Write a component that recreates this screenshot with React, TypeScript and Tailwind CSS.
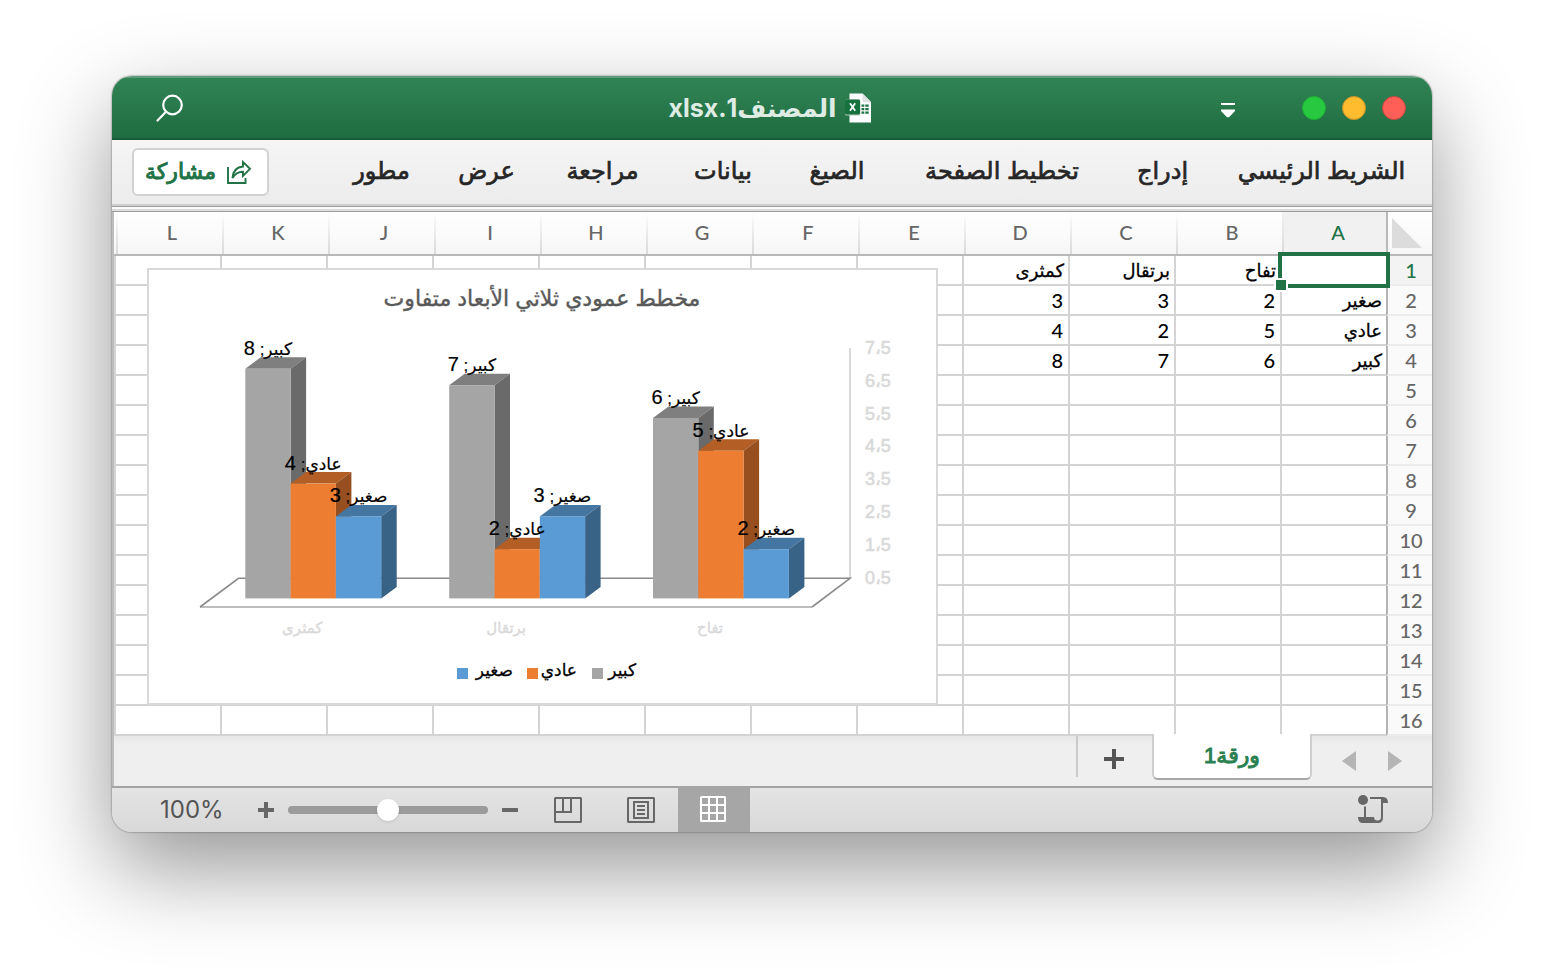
import React from 'react';

const TABS = [
  { label: 'الشريط الرئيسي', width: 'w-[163px]' },
  { label: 'إدراج', width: 'w-[55px]' },
  { label: 'تخطيط الصفحة', width: 'w-[166px]' },
  { label: 'الصيغ', width: 'w-16' },
  { label: 'بيانات', width: 'w-16' },
  { label: 'مراجعة', width: 'w-[77px]' },
  { label: 'عرض', width: 'w-[55px]' },
  { label: 'مطور', width: 'w-[55px]' },
];
const COLUMNS = ['A', 'B', 'C', 'D', 'E', 'F', 'G', 'H', 'I', 'J', 'K', 'L'];
const ROWS = Array.from({ length: 16 }, (_, i) => i + 1);
const CELLS: Record<string, string | number> = {
  B1: 'تفاح', C1: 'برتقال', D1: 'كمثرى',
  A2: 'صغير', B2: 2, C2: 3, D2: 3,
  A3: 'عادي', B3: 5, C3: 2, D3: 4,
  A4: 'كبير', B4: 6, C4: 7, D4: 8,
};

const SERIES = [
  { name: 'كبير', front: '#a5a5a5', top: '#7f7f7f', side: '#6a6a6a' },
  { name: 'عادي', front: '#ed7d31', top: '#b35e25', side: '#974f1f' },
  { name: 'صغير', front: '#5b9bd5', top: '#4575a1', side: '#396287' },
];
const GROUPS = [
  { name: 'كمثرى', x: 245.3, values: [8, 4, 3] },
  { name: 'برتقال', x: 449.2, values: [7, 2, 3] },
  { name: 'تفاح', x: 653, values: [6, 5, 2] },
];
const BASE = 598.4;
const UNIT = 32.8;
const BAR = 45.3;
const barTop = (v: number) => BASE - (Math.min(v, 7.5) - 0.5) * UNIT;

function Chart() {
  return (
    <svg viewBox="149 270 787 433" className="block w-full font-['Liberation_Sans','DejaVu_Sans',sans-serif]" role="img" aria-label="مخطط عمودي ثلاثي الأبعاد متفاوت">
      <text x="542" y="306" textAnchor="middle" direction="rtl" fontSize="22" fill="#595959" stroke="#595959" strokeWidth="0.4">مخطط عمودي ثلاثي الأبعاد متفاوت</text>
      <path d="M850 348V578" stroke="#d9d9d9" strokeWidth="2" />
      <path d="M812 607H200" stroke="#bdbdbd" strokeWidth="2" fill="none" />
      <path d="M200 607L238.5 578.3H850L812 607" stroke="#8a8a8a" strokeWidth="1.6" fill="none" />
      {[7, 6, 5, 4, 3, 2, 1, 0].map((n, i) => (
        <text key={n} x="865" y={354 + i * UNIT} direction="ltr" fontSize="18" fill="#d9d9d9" stroke="#d9d9d9" strokeWidth="0.6">{`${n}،5`}</text>
      ))}
      {GROUPS.map((g) => (
        <g key={g.name}>
          {g.values.map((v, i) => {
            const x = g.x + i * BAR;
            const r = x + BAR;
            const t = barTop(v);
            const s = SERIES[i];
            return (
              <g key={s.name}>
                <path d={`M${x} ${t}L${x + 15.5} ${t - 11.5}H${r + 15.5}L${r} ${t}Z`} fill={s.top} />
                <path d={`M${r} ${t}L${r + 15.5} ${t - 11.5}V${BASE - 11.5}L${r} ${BASE}Z`} fill={s.side} />
                <rect x={x} y={t} width={BAR} height={BASE - t} fill={s.front} />
              </g>
            );
          })}
          <text x={g.x + 57} y="633" textAnchor="middle" direction="rtl" fontSize="15" fill="#d9d9d9" stroke="#d9d9d9" strokeWidth="0.4">{g.name}</text>
        </g>
      ))}
      {GROUPS.map((g) =>
        g.values.map((v, i) => (
          <text key={g.name + i} x={g.x + (i + 0.5) * BAR} y={barTop(v) - 14} textAnchor="middle" direction="rtl" fontSize="17" fill="#000" stroke="#000" strokeWidth="0.2">
            {`${SERIES[i].name}; `}<tspan fontSize="20">{v}</tspan>
          </text>
        )),
      )}
      {[{ s: 2, x: 457, t: 513 }, { s: 1, x: 527, t: 577 }, { s: 0, x: 592, t: 636 }].map((l) => (
        <g key={l.s}>
          <rect x={l.x} y="668" width="11" height="11" fill={SERIES[l.s].front} />
          <text x={l.t} y="676" direction="rtl" fontSize="17" fill="#000" stroke="#000" strokeWidth="0.3">{SERIES[l.s].name}</text>
        </g>
      ))}
    </svg>
  );
}

function TitleBar() {
  return (
    <header className="grid h-16 grid-cols-[1fr_auto_1fr] items-center border-t-2 border-b-2 border-t-[#5f9c7b] border-b-[#185c37] bg-linear-to-b from-[#318455] to-[#1e6c41] pr-[26px] pl-[22px]">
      <div className="flex items-center gap-4">
        <button aria-label="إغلاق" className="size-6 rounded-full border border-[#c9473f] bg-[#ff5f57]" />
        <button aria-label="تصغير" className="size-6 rounded-full border border-[#c8932a] bg-[#febc2e]" />
        <button aria-label="تكبير" className="size-6 rounded-full border border-[#1fae36] bg-[#28c840]" />
        <button aria-label="تخصيص شريط الأدوات" className="mr-[51px]">
          <svg viewBox="0 0 14 15" className="mt-1 block h-[15px] w-3.5" fill="#fff"><path d="M0 0h14v2H0zM0 6.5h14v1.5L8 14.3H6L0 8z" /></svg>
        </button>
      </div>
      <div className="flex items-center gap-2">
        <svg viewBox="0 0 27 30" className="h-[30px] w-[27px]" aria-hidden="true">
          <path d="M4.500 0.500h13l8.500 8.500V29.500H4.500z" fill="#fff" />
          <path d="M17.500 0.500v6.500q0 2 2 2H26z" fill="#dde3df" />
          <path d="M16.500 11.500h2.800v2.300h-2.800zM20.300 11.500h3.400v2.300h-3.400zM16.500 15h2.800v2.300h-2.800zM20.300 15h3.400v2.300h-3.400zM16.500 18.500h2.800v2.300h-2.800zM20.300 18.500h3.400v2.300h-3.400z" fill="#1f7244" />
          <rect y="6.500" width="15.500" height="16" rx="1.500" fill="#b9c9bf" />
          <rect y="6.500" width="15" height="15" rx="1.500" fill="#17713d" />
          <path d="M5 10.300l5.200 7.500M10.200 10.300L5 17.800" stroke="#fff" strokeWidth="1.800" />
        </svg>
        <h1 className="text-[25px] leading-8 font-bold whitespace-nowrap text-[#dfece4]">المصنف1.xlsx</h1>
      </div>
      <div className="flex justify-end pl-5">
        <button aria-label="بحث">
          <svg viewBox="0 0 30 30" className="size-[30px]" fill="none" stroke="#fff" strokeWidth="2.200" strokeLinecap="round">
            <circle cx="18.500" cy="12" r="9.300" /><path d="M12 18.700L3.500 27.500" />
          </svg>
        </button>
      </div>
    </header>
  );
}

function Ribbon() {
  return (
    <nav className="flex h-16 items-center justify-between bg-linear-to-b from-[#f5f5f5] to-[#ececec] pr-[29px] pl-5">
      <div className="flex items-center gap-[50px]">
        {TABS.map((t) => (
          <button key={t.label} className={`flex justify-center pb-0.5 text-[24px] leading-8 whitespace-nowrap text-[#262626] [-webkit-text-stroke:0.7px_#262626] ${t.width}`}>{t.label}</button>
        ))}
      </div>
      <button className="flex h-12 w-[137px] items-center justify-center gap-2.5 rounded-md border-2 border-[#d2d2d2] bg-white pr-1 text-[22px] leading-8 text-[#217346] [-webkit-text-stroke:1px_#217346]">
        <svg viewBox="0 0 26 26" className="size-[26px] shrink-0" fill="none" stroke="#217346" strokeWidth="1.900">
          <path d="M2 8v16h17.500v-5" /><path d="M6.500 19C7 12 10.500 8 17 7.500V3l7 6.800-7 7.200v-4.200C12.500 12.800 9 14.500 6.500 19z" />
        </svg>
        <span className="pb-0.5">مشاركة</span>
      </button>
    </nav>
  );
}

function Divider() {
  return (
    <div aria-hidden="true">
      <div className="h-0.5 bg-[#d0d0d0]" />
      <div className="h-px bg-[#9c9c9c]" />
      <div className="h-0.5 bg-[#fafafa]" />
      <div className="h-0.5 bg-[#dcdcdc]" />
      <div className="h-px bg-[#9c9c9c]" />
    </div>
  );
}

function Grid() {
  return (
    <div className="relative border-l-2 border-[#bdbdbd]">
      <table className="w-full table-fixed border-separate border-spacing-0 font-[Lato,'DejaVu_Sans',sans-serif] text-[20px] leading-7">
        <thead>
          <tr className="h-11 bg-linear-to-b from-white to-[#f6f6f6]">
            <th className="w-[46px] border-b-2 border-l-2 border-[#b9b9b9] p-0">
              <svg viewBox="0 0 30 30" className="mr-[10px] size-[30px]"><path d="M0 0v30h30z" fill="#dcdcdc" /></svg>
            </th>
            {COLUMNS.map((c) => (
              <th key={c} scope="col" className={`border-b-2 border-[#b9b9b9] p-0 font-medium ${c === 'A' ? 'text-[#217346]' : 'text-[#666]'}`}>
                <div className={`ml-0.5 flex h-[42px] items-center ${c === 'A' ? 'bg-[#f1f1f1]' : ''}`}>
                  <span className="flex-1 pb-0.5 pl-1.5 text-center">{c}</span>
                  <span className="h-full w-0.5 bg-linear-to-b from-transparent to-[#dadada]" />
                </div>
              </th>
            ))}
          </tr>
        </thead>
        <tbody>
          {ROWS.map((r) => (
            <tr key={r} className="h-[30px]">
              <th scope="row" className={`border-b-2 border-l-2 border-b-[#ececec] border-l-[#b4b4b4] p-0 pl-0.5 text-center font-medium ${r === 1 ? 'bg-[#f3f3f3] text-[#217346]' : 'bg-[#fafafa] text-[#666]'}`}>{r}</th>
              {COLUMNS.map((c) => {
                const value = CELLS[c + r];
                return (
                  <td key={c} className={`relative h-[30px] border-b-2 border-l-2 border-[#d4d4d4] bg-white p-0 text-right whitespace-nowrap text-black ${typeof value === 'number' ? 'pr-[5px] font-medium' : 'pr-1 text-[18px] [-webkit-text-stroke:0.3px_#000]'}`}>
                    {value}
                    {c + r === 'A1' && (
                      <span className="absolute -top-1 -right-1 -bottom-1 -left-1 z-10 border-4 border-[#217346]">
                        <span className="absolute -bottom-2 -left-2 size-3.5 border-2 border-white bg-[#217346]" />
                      </span>
                    )}
                  </td>
                );
              })}
            </tr>
          ))}
        </tbody>
      </table>
      <div className="absolute top-14 left-[33px] z-10 w-[791px] border-2 border-[#d9d9d9] bg-white">
        <Chart />
      </div>
    </div>
  );
}

function SheetBar() {
  return (
    <div className="flex h-[50px] border-l-2 border-[#bdbdbd] bg-linear-to-b from-[#e7e7e7] via-[#efefef] via-20% to-[#efefef]">
      <div className="flex items-center gap-8 pr-[30px] pl-[30px]">
        <button aria-label="السابق"><svg viewBox="0 0 14 20" className="h-5 w-3.5" fill="#b5b5b5"><path d="M0 0l14 10L0 20z" /></svg></button>
        <button aria-label="التالي"><svg viewBox="0 0 14 20" className="h-5 w-3.5" fill="#b5b5b5"><path d="M14 0L0 10l14 10z" /></svg></button>
      </div>
      <button className="relative z-10 -mt-0.5 h-[46px] w-40 rounded-b-md border-x-2 border-b-2 border-x-[#cfcfcf] border-b-[#a8a8a8] bg-white font-['Liberation_Sans','DejaVu_Sans',sans-serif] text-[22px] leading-8 text-[#2a8050] [-webkit-text-stroke:1px_#2a8050]">ورقة1</button>
      <button aria-label="ورقة جديدة" className="flex h-[41px] w-[76px] items-center justify-center border-l-2 border-[#cacaca] pt-1 pr-0.5">
        <svg viewBox="0 0 20 20" className="size-5" fill="#555"><path d="M8 0h4v8h8v4h-8v8H8v-8H0V8h8z" /></svg>
      </button>
    </div>
  );
}

function StatusBar() {
  return (
    <footer className="flex h-[46px] items-stretch justify-between border-t-2 border-[#a3a3a3] bg-linear-to-b from-[#e4e4e4] to-[#d8d8d8] pr-11 pl-12">
      <button aria-label="تسجيل ماكرو" className="self-center">
        <svg viewBox="0 1 30 30" className="size-[30px]" fill="#676767">
          <circle cx="5" cy="6" r="5" />
          <path d="M12 3h13q5 0 5 6h-5v14q0 6-5 6H5q-5 0-5-6h6V12.500h2V23h8q0 3.500 3.500 3.500T23 23V5H12z" />
        </svg>
      </button>
      <div className="flex items-center">
        <button aria-label="عرض عادي" aria-pressed="true" className="-mt-0.5 flex h-[46px] w-[72px] items-center justify-center self-start bg-[#a6a6a6] pr-0.5">
          <svg viewBox="0 0 26 26" className="size-[26px]" fill="none" stroke="#fff" strokeWidth="2"><rect x="1" y="1" width="24" height="24" rx="0.500" /><path d="M9 1v24M17 1v24M1 9h24M1 17h24" /></svg>
        </button>
        <button aria-label="تخطيط الصفحة" className="mr-[23px]">
          <svg viewBox="0 0 28 26" className="h-[26px] w-7" fill="none" stroke="#676767" strokeWidth="2"><rect x="1" y="1" width="26" height="24" rx="0.500" /><path d="M7 5h14v16H7zM10 9h8M10 13h8M10 17h8" /></svg>
        </button>
        <button aria-label="معاينة فواصل الصفحات" className="mr-[45px]">
          <svg viewBox="0 0 28 26" className="h-[26px] w-7" fill="none" stroke="#676767" strokeWidth="2"><rect x="1" y="1" width="26" height="24" rx="0.500" /><path d="M1 15h16V1M9 1v14" /></svg>
        </button>
        <button aria-label="تصغير العرض" className="mr-9"><svg viewBox="0 0 16 16" className="size-4" fill="#676767"><rect y="6" width="16" height="4" rx="0.500" /></svg></button>
        <input
          type="range" min="0" max="200" defaultValue="100" aria-label="تكبير/تصغير" dir="rtl"
          className="mx-3.5 h-2 w-[200px] appearance-none rounded-full bg-[#9b9b9b] [&::-webkit-slider-thumb]:size-[22px] [&::-webkit-slider-thumb]:appearance-none [&::-webkit-slider-thumb]:rounded-full [&::-webkit-slider-thumb]:bg-white [&::-webkit-slider-thumb]:shadow"
        />
        <button aria-label="تكبير العرض"><svg viewBox="0 0 16 16" className="size-4" fill="#676767"><path d="M6 0h4v6h6v4h-6v6H6v-6H0V6h6z" /></svg></button>
        <output dir="ltr" className="mr-[34px] text-[24px] leading-8 text-[#555]">100%</output>
      </div>
    </footer>
  );
}

export default function App() {
  return (
    <main dir="rtl" className="min-h-screen overflow-hidden bg-white px-28 py-[76px] font-[Inter,'DejaVu_Sans',sans-serif]">
      <div className="overflow-hidden rounded-[20px] shadow-[0_0_2px_rgba(0,0,0,0.6),0_36px_90px_rgba(0,0,0,0.42)]">
        <TitleBar />
        <Ribbon />
        <Divider />
        <Grid />
        <SheetBar />
        <StatusBar />
      </div>
    </main>
  );
}
